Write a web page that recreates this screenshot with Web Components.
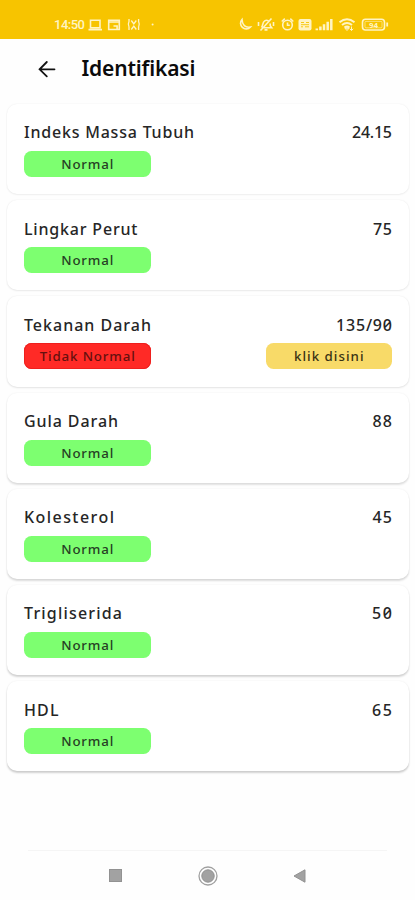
<!DOCTYPE html>
<html lang="id">
<head>
<meta charset="utf-8">
<title>Identifikasi</title>
<style>
html,body{margin:0;background:#fefefe}
body{font-family:"Noto Sans","Open Sans",sans-serif;color:#262626}
</style>
</head>
<body>
<health-app></health-app>
<script>
const define = (name, html, ready) => customElements.define(name, class extends HTMLElement {
  connectedCallback() {
    if (this.shadowRoot) return;
    this.attachShadow({mode: 'open'}).innerHTML = html;
    if (ready) ready(this, this.shadowRoot);
  }
});

/* Text label whose tracking is set so that it spans a given width */
define('fit-text', `<style>
:host{display:inline-block;white-space:nowrap}
span{display:inline-block}
</style><span><slot></slot></span>`, (el, root) => {
  const span = root.querySelector('span');
  const w = +el.getAttribute('w'), n = el.textContent.length;
  const gap = (w - span.getBoundingClientRect().width) / (n - 1);
  span.style.letterSpacing = gap + 'px';
  span.style.marginRight = -gap + 'px';
});

define('status-bar', `<style>
:host{display:block;height:39px;background:#f7c400;color:#fff4c4;font-family:Roboto,sans-serif}
.row{display:flex;align-items:center;height:32px;padding:17px 26px 0 54px;box-sizing:border-box;font-size:13px;font-weight:500;line-height:15px}
svg{display:block;fill:none;stroke:currentColor;stroke-width:1.6;flex:none;overflow:visible}
svg text{fill:currentColor;stroke:none}
</style><div class="row">
<fit-text w="31">14:50</fit-text>
<svg width="65" height="16" viewBox="85 17 65 16" style="flex:1 0 65px;width:65px" preserveAspectRatio="xMinYMid meet">
 <path d="M90.500 20.300h9.500v7.500h-9.500zM88.500 29.600h13.500"/>
 <path d="M108.700 20.300h10.600v9.200h-10.600zM108.700 22h10.600M113.500 26h3.600v3"/>
 <path d="M129 19v2.500q-1.500 3 0 5.500V30M138.600 19v2.500q1.500 3 0 5.500V30M131.300 20.500l2.500 3.500 2.500-3.500M131.300 29.500l2.500-3.500 2.500 3.500" stroke-width="1.300"/>
 <circle cx="152.600" cy="24.500" r="1" fill="currentColor" stroke="none"/>
</svg>
<svg width="153" height="16" viewBox="236 17 153 16">
 <path d="M242 19.200a5.400 5.400 0 1 0 8.300 7.600q-7.800 1-8.300-7.600z" transform="translate(0 .3)"/>
 <path d="M261.500 27.500c1.700-2 .8-5.200 3.200-6.600 2-1.200 3.700-.2 4.500.8M270.200 23.500v2.200l1.500 2h-8M264.500 29.900h3M260.500 30.500l11-12M258.500 22v4M273.500 22v4"/>
 <circle cx="287.500" cy="25" r="4.800"/><path d="M287.500 22.500v2.800h2.300M281.800 21.500l3-2.800M290.300 18.700l3 2.800"/>
 <rect x="298.500" y="19" width="13" height="11.500" rx="2" fill="currentColor" stroke="none"/>
 <path d="M301 22.500h3M306 22.500h3M301 26.800h2M305 26.800h4M301 24.700h8" stroke="#f7c400" stroke-width=".9"/>
 <path d="M316.800 30.200v-1.700M320.400 30.200v-3.700M324 30.200v-6M327.700 30.200v-8.500M331.300 30.200V19" stroke-width="2.500"/>
 <path d="M339.500 22.300q7.500-6 15 0M342 25q5-4 10 0M344.500 27.600q2.500-2 5 0" stroke-width="2"/><path d="M347 30.500l-2-2.200h4zM351.500 26.500v4M349.800 28.800l1.700 1.700 1.700-1.700" stroke-width="1"/>
 <rect x="362.500" y="19.200" width="22" height="10.800" rx="3"/><rect x="365" y="21.400" width="17" height="6.400" rx="1" stroke-width=".6"/><path d="M387.200 22.500v4" stroke-width="1.800"/>
 <text x="373.500" y="27.600" text-anchor="middle" font-size="8" font-weight="700">94</text>
</svg></div>`);

define('page-header', `<style>
:host{display:flex;align-items:center;height:58px;padding:0 0 2px 38px;color:#0b0b0b;font-size:21px;font-weight:600}
svg{display:block;margin:1px 25.500px 0 0;fill:none;stroke:#111;stroke-width:1.800;stroke-linecap:round}
</style><svg width="18" height="18" viewBox="0 0 18 18"><path d="M16.500 9.300H2M8.800 2L1.600 9.300l7.200 7"/></svg><slot></slot>`);

define('state-chip', `<style>
:host{display:flex;justify-content:center;align-items:center;width:126.500px;height:26px;border-radius:7.500px;background:#7dff70;color:#264024;font-size:13.300px;font-weight:500;line-height:26px}
:host([kind=bad]){background:#ff2a26;color:#65100e;box-shadow:inset 0 0 0 1px #ee201e}
:host([kind=link]){background:#f8da68;color:#3a3213}
</style><slot></slot>`);

define('result-card', `<style>
:host{display:flex;flex-direction:column;gap:7.600px;box-sizing:border-box;height:90.200px;padding:17.400px 17px 0;border-radius:10px;background:#fff;box-shadow:0 0 2px rgba(0,0,0,.07),0 var(--drop,1px) 2px rgba(0,0,0,var(--shade,.1))}
div{display:flex;justify-content:space-between;align-items:center}
.top{height:22px;font-size:16px;font-weight:500;line-height:22px}
[name=value]::slotted(*){font-feature-settings:"zero"}
</style><div class="top"><slot name="label"></slot><slot name="value"></slot></div><div><slot></slot></div>`);

define('nav-bar', `<style>
:host{display:block;margin:0 28px;border-top:1px solid #f5f5f5}
div{display:flex;height:49px;align-items:center;justify-content:space-between;padding:0 81px 0 81px}
svg{display:block}
</style><div>
<svg width="13" height="13"><rect x=".5" y=".5" width="12" height="12" fill="#a2a2a2" stroke="#929292"/></svg>
<svg width="20" height="20"><circle cx="10" cy="10" r="9" fill="none" stroke="#a0a0a0" stroke-width="1.300"/><circle cx="10" cy="10" r="6.200" fill="#a2a2a2" stroke="#919191"/></svg>
<svg width="13" height="14"><path d="M12 .8v12.400L1 7z" fill="#a2a2a2" stroke="#929292"/></svg>
</div>`);

const rows = [
  ['Indeks Massa Tubuh', 170, '24.15', 40],
  ['Lingkar Perut', 113.5, '75', 19],
  ['Tekanan Darah', 127, '135/90', 56],
  ['Gula Darah', 94, '88', 19.5],
  ['Kolesterol', 90, '45', 19.5],
  ['Trigliserida', 98, '50', 20],
  ['HDL', 34.5, '65', 20]
];
const card = ([label, w, value, vw], i) => `<result-card style="--shade:${(.05 + i * .022).toFixed(3)};--drop:${i > 2 ? 2 : 1}px">
<fit-text slot="label" w="${w}">${label}</fit-text><fit-text slot="value" w="${vw}">${value}</fit-text>
${i === 2
  ? '<state-chip kind="bad"><fit-text w="95">Tidak Normal</fit-text></state-chip><state-chip kind="link"><fit-text w="69.5">klik disini</fit-text></state-chip>'
  : '<state-chip><fit-text w="52">Normal</fit-text></state-chip>'}
</result-card>`;

define('health-app', `<style>
:host{display:flex;flex-direction:column;width:415px;height:900px;background:#fefefe;overflow:hidden}
main{display:flex;flex-direction:column;gap:6px;padding:5px 6px 0 7px;flex:1}
</style><status-bar></status-bar><page-header><fit-text w="114">Identifikasi</fit-text></page-header><main>${rows.map(card).join('')}</main><nav-bar></nav-bar>`);
</script>
</body>
</html>
